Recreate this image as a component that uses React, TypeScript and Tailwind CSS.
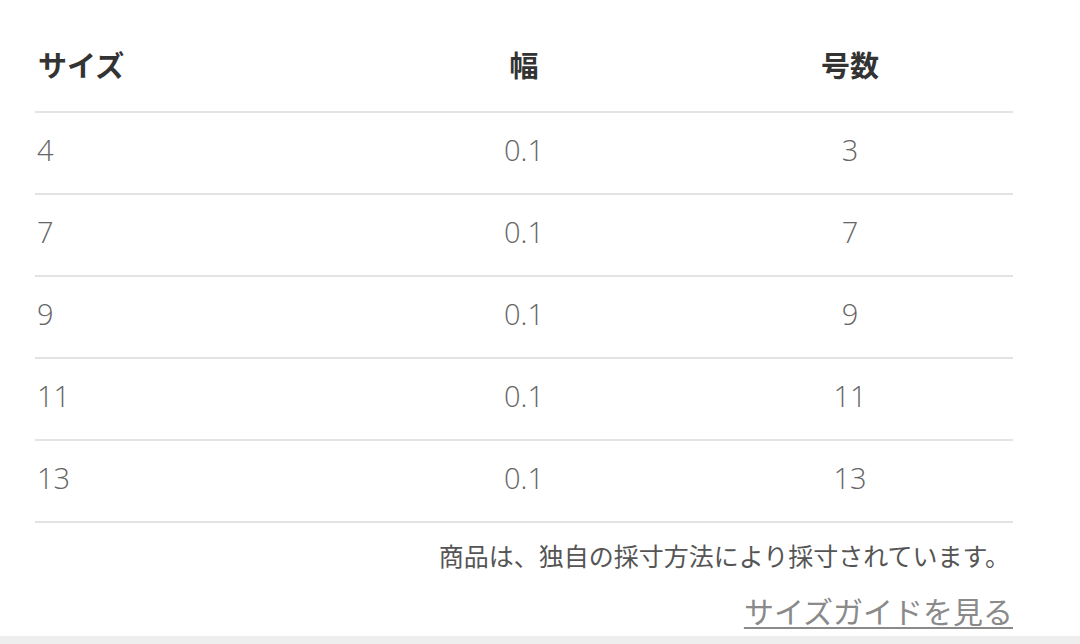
import React from 'react';

const rows = [
  { size: '4', width: '0.1', num: '3' },
  { size: '7', width: '0.1', num: '7' },
  { size: '9', width: '0.1', num: '9' },
  { size: '11', width: '0.1', num: '11' },
  { size: '13', width: '0.1', num: '13' },
];

const font = { fontFamily: '"Open Sans", "Noto Sans CJK JP", sans-serif' };

export default function App() {
  return (
    <div className="w-[1080px] h-[644px] bg-white flex flex-col overflow-hidden" style={font}>
      <div className="flex-1 ml-[35px] w-[978px] pt-[29px]">
        <div className="grid grid-cols-3 h-[84px] items-center border-b-2 border-[#e3e3e3] pb-[8px] text-[29px] font-bold text-[#333]">
          <div className="pl-[3px]">サイズ</div>
          <div className="text-center">幅</div>
          <div className="text-center">号数</div>
        </div>
        {rows.map((r, i) => (
          <div
            key={i}
            className="grid grid-cols-3 h-[82px] items-center border-b-2 border-[#e3e3e3] pb-[6px] text-[29px] font-light text-[#666]"
          >
            <div className="pl-[2px]">{r.size}</div>
            <div className="text-center">{r.width}</div>
            <div className="text-center">{r.num}</div>
          </div>
        ))}
        <div className="flex flex-col items-end">
          <p className="mt-[17px] mr-[3px] text-[25px] leading-[32px] text-[#555]">
            商品は、独自の採寸方法により採寸されています。
          </p>
          <a className="mt-[21px] text-[30px] leading-[38px] text-[#8a8a8a] underline decoration-2 underline-offset-[4px] decoration-[#8a8a8a]">
            サイズガイドを見る
          </a>
        </div>
      </div>
      <div className="h-[8px] bg-[#eeeeee]" />
    </div>
  );
}
